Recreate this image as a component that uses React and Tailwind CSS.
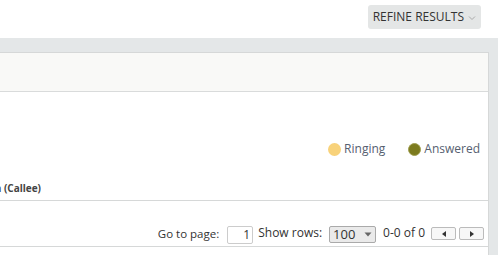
import React from 'react';

const font = { fontFamily: '"Open Sans", "Noto Sans", sans-serif' };

const App = () => {
  return (
    <div className="w-[498px] h-[255px] overflow-hidden bg-white flex flex-col" style={font}>
      {/* Top bar */}
      <div className="h-[38px] shrink-0 flex items-start justify-end pr-[17px] pt-[5px]">
        <button className="h-[24px] px-[5px] rounded-[3px] bg-[#e4e6e6] flex items-center gap-[4px] text-[12px] text-[#333]">
          REFINE RESULTS
          <svg width="8" height="6" viewBox="0 0 8 6" className="mt-[1px]">
            <path d="M1 1.5 L4 4.5 L7 1.5" fill="none" stroke="#aaa" strokeWidth="1" />
          </svg>
        </button>
      </div>

      {/* Gray area */}
      <div className="flex-1 bg-[#e4e7e8] pt-[14px] pr-[9px] flex flex-col">
        <div className="flex-1 bg-white border-t border-r border-[#d6d8d8] flex flex-col">
          <div className="h-[39px] shrink-0 bg-[#f9f9f7] border-b border-[#d9dbdb]" />

          {/* Legend */}
          <div className="h-[75px] shrink-0 flex items-end justify-end pr-[8px] pb-[9px] gap-[23px] text-[12px] text-[#556070]">
            <div className="flex items-center gap-[3px]">
              <span className="w-[13px] h-[13px] rounded-full bg-[#f8d27a]" />
              Ringing
            </div>
            <div className="flex items-center gap-[3px]">
              <span className="w-[13px] h-[13px] rounded-full bg-[#7c7b1e] border border-[#a09f50]" />
              Answered
            </div>
          </div>

          {/* Column header */}
          <div className="h-[34px] shrink-0 flex items-end pb-[4px] border-b border-[#d6d8d8]">
            <div className="w-[41px] overflow-hidden flex justify-end whitespace-nowrap text-[10px] font-bold text-[#444]">
              Destination (Callee)
            </div>
          </div>

          {/* Pagination */}
          <div className="h-[46px] shrink-0 flex items-end pb-[2px] justify-end pr-[4px] text-[12px] text-[#333] border-b border-[#d6d8d8]">
            <span className="mr-[8px] mb-[2px] text-[11.5px]">Go to page:</span>
            <div className="w-[26px] h-[18px] border border-[#ccc] rounded-[2px] flex items-center justify-end pr-[2px] text-[12px] mr-[5px]">1</div>
            <span className="mr-[7px] mb-[2px]">Show rows:</span>
            <div className="w-[47px] h-[17px] mb-[1px] border border-[#aaa] rounded-[2px] bg-[#eaeaea] flex items-center justify-between px-[3px] text-[13px] mr-[7px]">
              100
              <svg width="8" height="5" viewBox="0 0 8 5">
                <path d="M0.5 0.5 L7.5 0.5 L4 4.5 Z" fill="#666" />
              </svg>
            </div>
            <span className="mr-[6px] mb-[2px]">0-0 of 0</span>
            <div className="flex gap-[3px] mb-[4px]">
              <div className="w-[25px] h-[13px] border border-[#bbb] rounded-[2px] bg-[#f7f7f7] flex items-center justify-center">
                <svg width="4" height="6" viewBox="0 0 4 6"><path d="M4 0 L0 3 L4 6 Z" fill="#333" /></svg>
              </div>
              <div className="w-[25px] h-[13px] border border-[#bbb] rounded-[2px] bg-[#f7f7f7] flex items-center justify-center">
                <svg width="4" height="6" viewBox="0 0 4 6"><path d="M0 0 L4 3 L0 6 Z" fill="#333" /></svg>
              </div>
            </div>
          </div>
          <div className="flex-1" />
        </div>
      </div>
    </div>
  );
};

export default App;
